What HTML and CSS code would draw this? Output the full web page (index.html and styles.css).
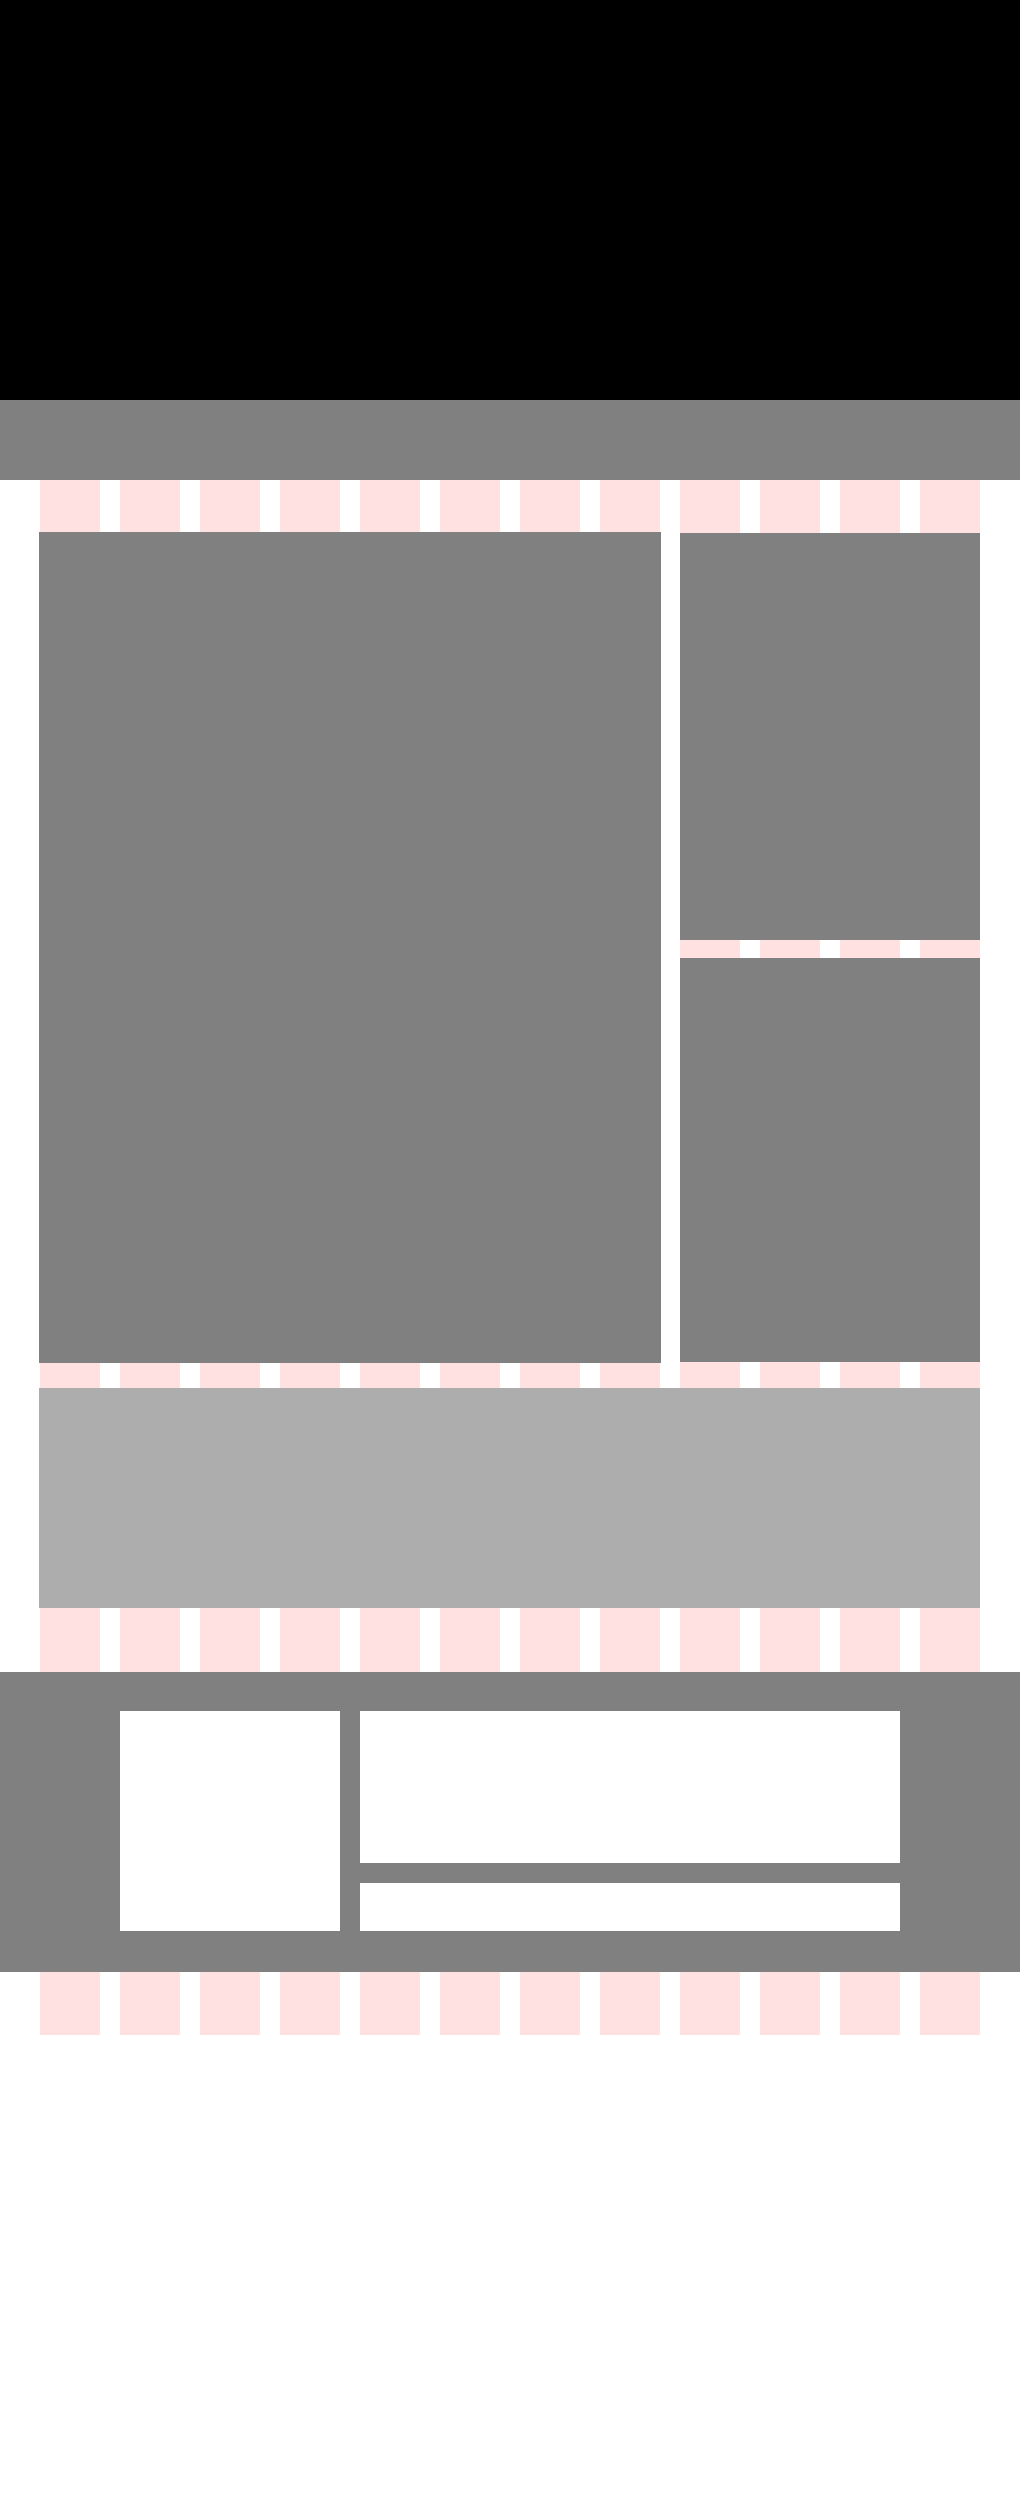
FILE: index.html
```html
<!DOCTYPE html>
<html lang="en">

<head>
    <meta charset="UTF-8">
    <meta name="viewport" content="width=device-width, initial-scale=1.0">
    <title>Layout</title>
    <link rel="stylesheet" href="styles.css">
</head>

<body>
    <!-- Cabecera -->
    <header class="hero"></header>
    <nav class="navbar"></nav>

    <!-- Cuerpo con la rejilla de 12 columnas -->
    <div class="grid-wrap">
        <main class="container">
            <div class="row">
                <section class="main-block"></section>
                <aside class="side">
                    <div class="side-top"></div>
                    <div class="side-bottom"></div>
                </aside>
            </div>
            <div class="banner"></div>
        </main>

        <footer class="footer">
            <div class="footer-inner">
                <div class="footer-box"></div>
                <div class="footer-right">
                    <div class="footer-top"></div>
                    <div class="footer-bottom"></div>
                </div>
            </div>
        </footer>
    </div>
</body>

</html>
```

FILE: styles.css
```css
body {
    padding: 0;
    margin: 0;
    background: #fff;
}

/* Cabecera */
.hero {
    height: 400px;
    background-color: #000;
}

.navbar {
    height: 80px;
    background-color: #808080;
}

/* Rejilla de fondo */
.grid-wrap {
    padding-bottom: 63px;
    background-image: repeating-linear-gradient(90deg, #ffe1e1 0 60px, transparent 60px 80px);
    background-size: 940px 100%;
    background-position: center top;
    background-repeat: no-repeat;
}

.container {
    width: 940px;
    margin: 0 auto;
    padding-top: 52px;
}

.row {
    display: flex;
    gap: 19px;
}

.main-block {
    width: 622px;
    height: 831px;
    margin-left: -1px;
    background-color: #808080;
}

.side {
    width: 300px;
    display: flex;
    flex-direction: column;
    gap: 18px;
    padding-top: 1px;
}

.side-top {
    height: 407px;
    background-color: #808080;
}

.side-bottom {
    height: 404px;
    background-color: #808080;
}

.banner {
    height: 220px;
    margin-top: 25px;
    margin-left: -1px;
    background-color: #adadad;
}

/* Pie de pagina */
.footer {
    margin-top: 64px;
    height: 300px;
    background-color: #808080;
    padding-top: 39px;
    box-sizing: border-box;
}

.footer-inner {
    width: 780px;
    margin: 0 auto;
    display: flex;
    gap: 20px;
}

.footer-box {
    width: 220px;
    height: 220px;
    background-color: #fff;
}

.footer-right {
    width: 540px;
    display: flex;
    flex-direction: column;
    gap: 20px;
}

.footer-top {
    height: 152px;
    background-color: #fff;
}

.footer-bottom {
    height: 48px;
    background-color: #fff;
}
```
